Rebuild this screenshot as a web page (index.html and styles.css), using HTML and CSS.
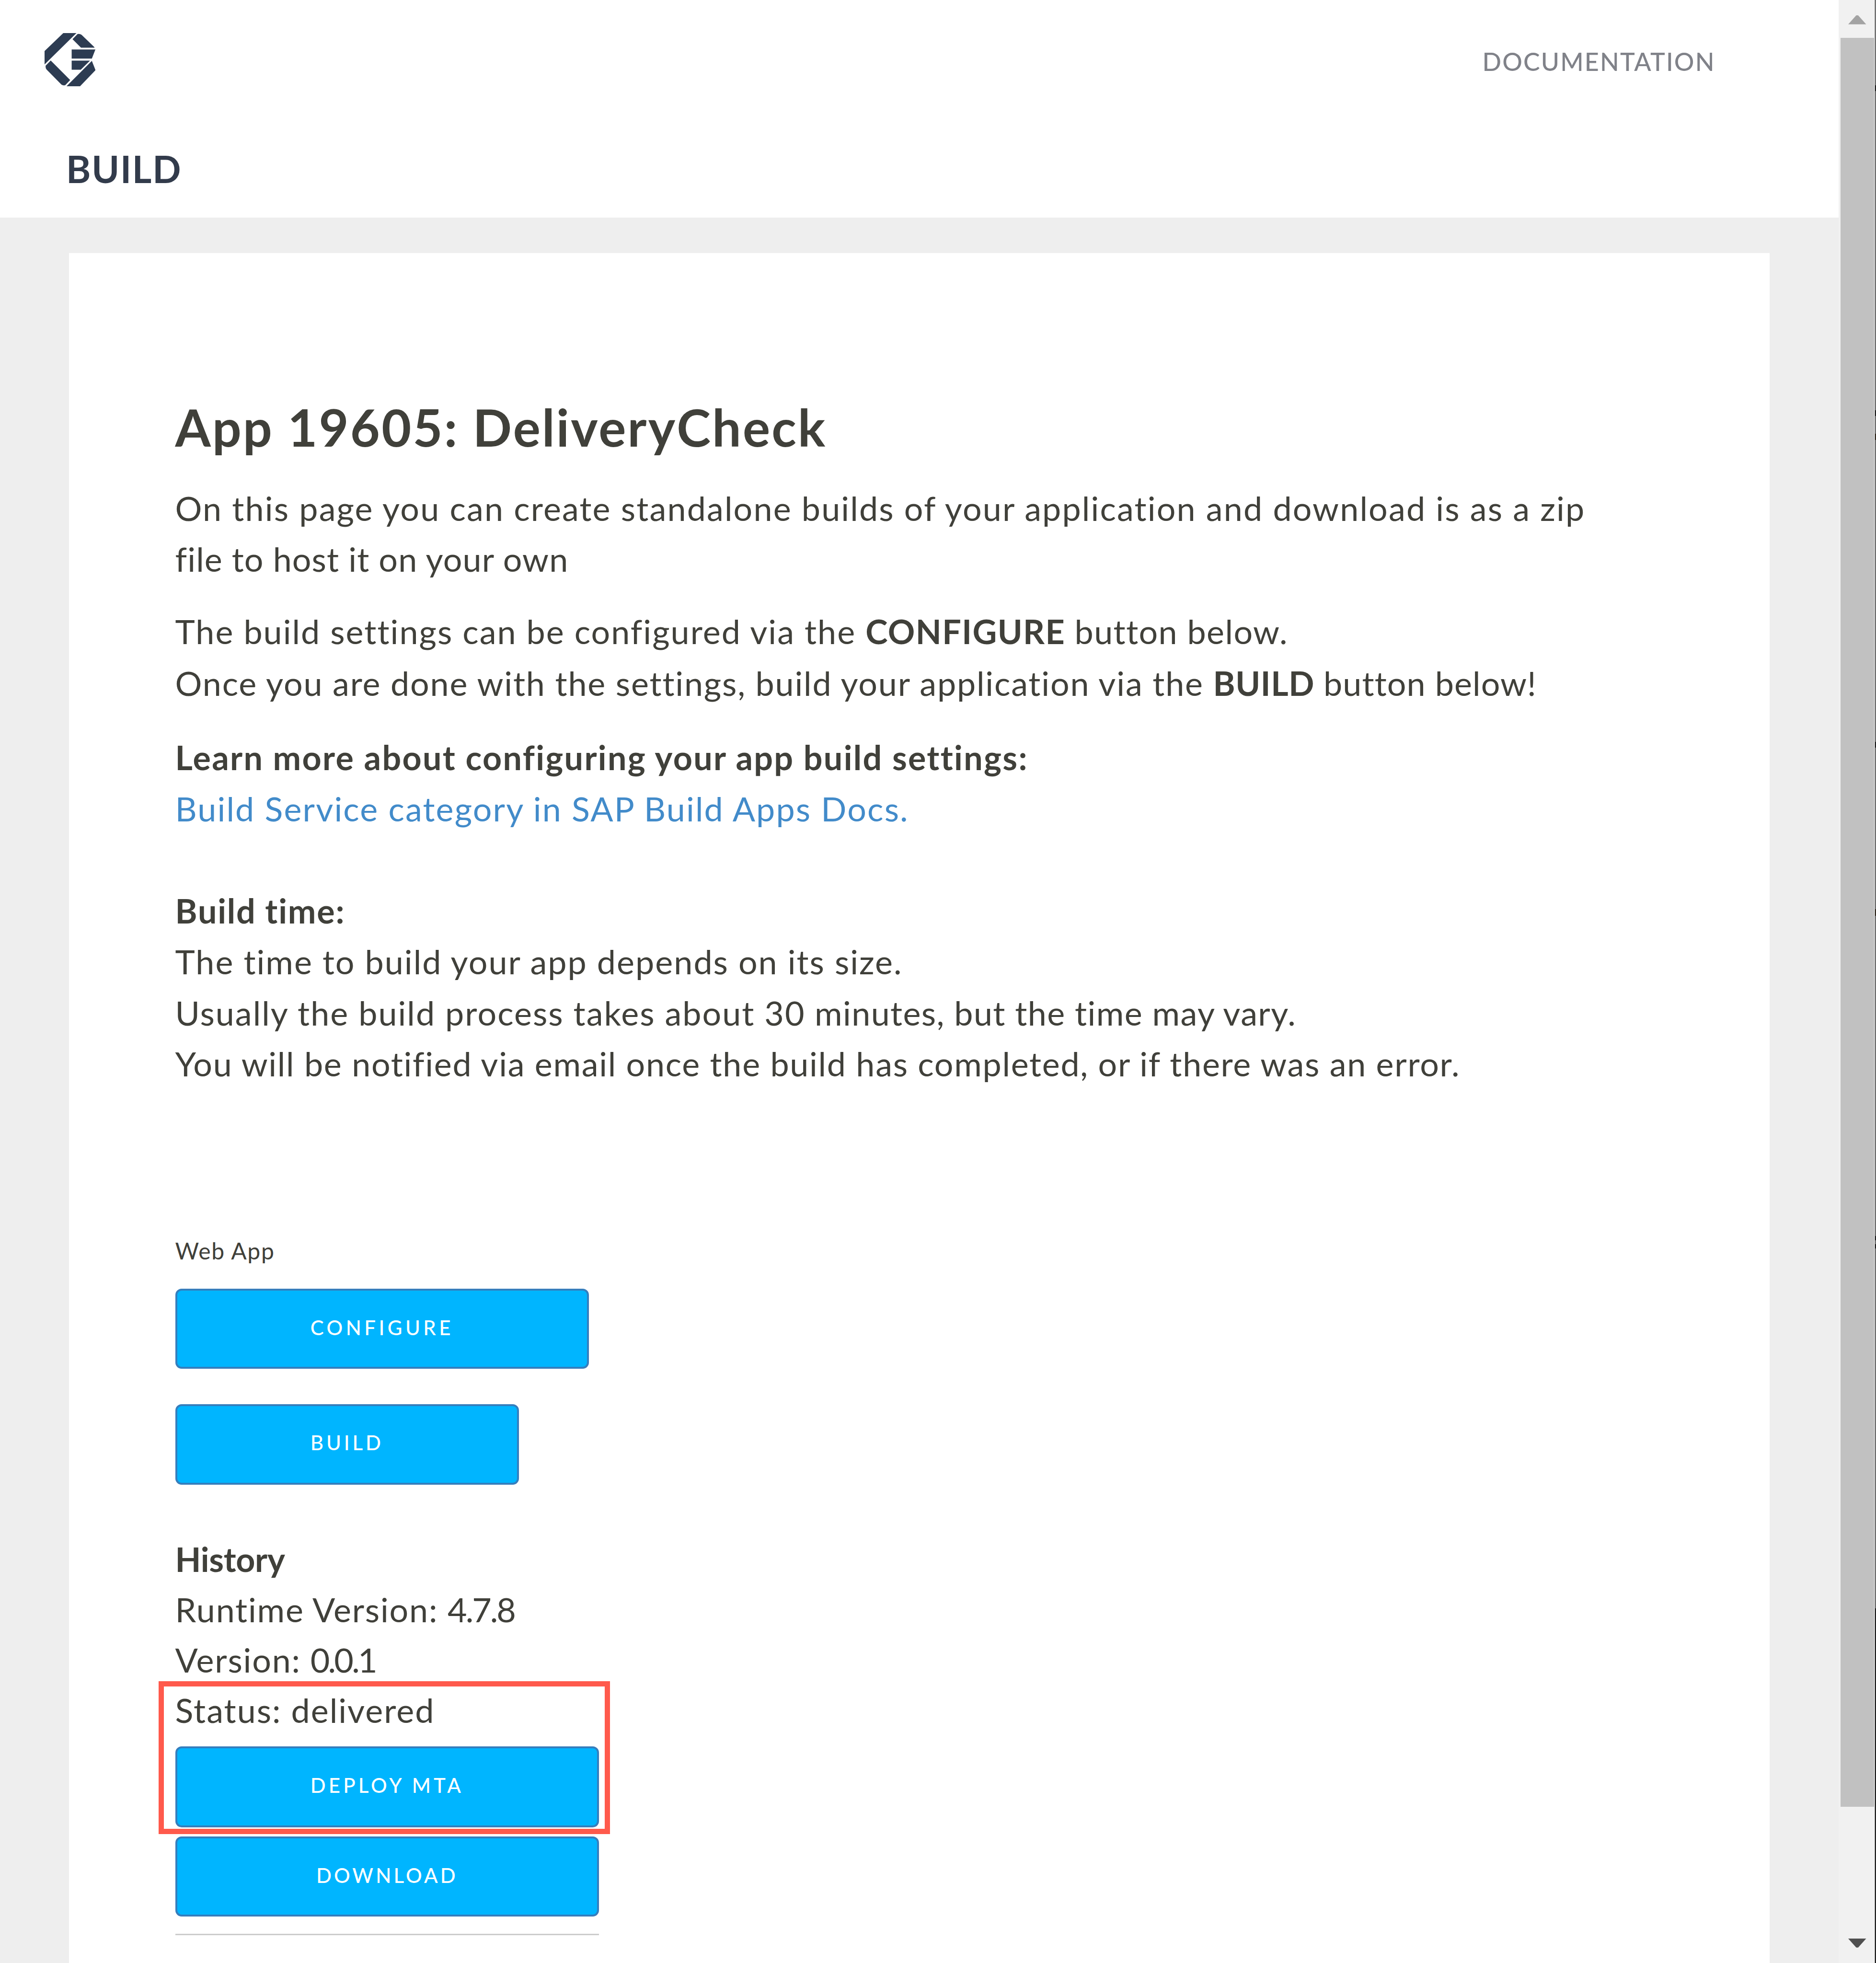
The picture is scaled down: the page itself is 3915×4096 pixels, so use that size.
FILE: index.html
```html
<!DOCTYPE html>
<html lang="en">
<head>
<meta charset="utf-8">
<title>Build</title>
<link rel="stylesheet" href="styles.css">
</head>
<body>
<div class="page">
  <header class="header">
    <div class="topbar">
      <svg class="logo" viewBox="120 90 414 432" aria-hidden="true">
        <path d="M272 90H379L120 345V236Z"/>
        <path d="M347 139L388 98Q405 94 421 104L525 205V209H416Z"/>
        <path d="M340 223H533L504 297H340Z"/>
        <path d="M340 314H489L414 388H340Z"/>
        <path d="M504 316L534 391L408 522H298Z"/>
        <path d="M170 313L328 471L288 513Q272 518 257 508L136 386Q127 375 128 355Z"/>
      </svg>
      <a class="nav-link">DOCUMENTATION</a>
    </div>
    <h2 class="section-title">BUILD</h2>
  </header>
  <main class="content">
    <section class="card">
      <h1 class="app-title">App 19605: DeliveryCheck</h1>
      <p class="intro"><span class="track-l">On this page you can create standalone builds of your application and download is as a zip</span><br><span class="track-xs">file to host it on your own</span></p>
      <p class="steps"><span class="track-m">The build settings can be configured via the </span><span class="track-s"><b>CONFIGURE</b> button below.</span><br><span class="track-sm">Once you are done with the settings, build your application via the </span><b class="track-xxs">BUILD</b><span class="track-xs"> button below!</span></p>
      <p class="details"><b class="track-xl">Learn more about configuring your app build settings:</b><br><a class="link track-l">Build Service category in SAP Build Apps Docs.</a><br><br><b class="track-sm">Build time:</b><br><span class="track-m">The time to build your app depends on its size.</span><br><span class="track-m">Usually the build process takes about 30</span><span class="track-s"> minutes, but the time may vary.</span><br><span class="track-s2">You will be notified via email once the build has completed, or if there was an error.</span></p>
      <div class="target">Web App</div>
      <a class="btn btn-configure">CONFIGURE</a>
      <a class="btn btn-build">BUILD</a>
      <div class="history">
        <div><b class="track-tight">History</b></div>
        <div><span class="track-sm">Runtime Version: </span><span class="digits">4.7.8</span></div>
        <div><span class="track-sm">Version: </span><span class="digits digits-tight">0.0.1</span></div>
        <div class="highlight">
          <div class="track-m">Status: delivered</div>
          <a class="btn btn-deploy">DEPLOY MTA</a>
        </div>
        <a class="btn btn-download">DOWNLOAD</a>
        <hr class="rule">
      </div>
    </section>
  </main>
</div>
<aside class="scrollbar">
  <svg class="arrow arrow-up" viewBox="0 0 38 19"><path d="M0 19L17 0H21L38 19Z"/></svg>
  <div class="thumb"></div>
  <svg class="arrow arrow-down" viewBox="0 0 38 19"><path d="M0 0H38L21 19H17Z"/></svg>
</aside>
<div class="edge"></div>
</body>
</html>
```
FILE: styles.css
```css
* { box-sizing: border-box; }

body {
  margin: 0;
  width: 3915px;
  height: 4096px;
  display: flex;
  overflow: hidden;
  background: #eee;
  color: #40403a;
  font: 400 70px/106.5px Lato, "Open Sans", sans-serif;
}

h1, h2, p { margin: 0; }
b { font-weight: 700; }

/* Letter tracking steps for running text */
.track-tight { letter-spacing: -0.29px; }
.track-xxs { letter-spacing: 0.6px; }
.track-xs { letter-spacing: 1.1px; }
.track-s { letter-spacing: 1.43px; }
.track-s2 { letter-spacing: 1.71px; }
.track-sm { letter-spacing: 1.82px; }
.track-m { letter-spacing: 2.03px; }
.track-l { letter-spacing: 2.15px; }
.track-xl { letter-spacing: 2.33px; }

.page { flex: none; width: 3836.6px; height: 4096px; overflow: hidden; }

.header { height: 453.5px; background: #fff; }

.topbar {
  height: 250px;
  padding: 69.4px 261px 0 92.6px;
  display: flex;
  justify-content: space-between;
  align-items: flex-start;
}
.logo { width: 106.4px; height: 111.1px; fill: #2d3c52; }
.nav-link {
  margin-top: 28.6px;
  margin-right: -4px;
  font-size: 52px;
  line-height: 60px;
  font-weight: 500;
  letter-spacing: 2.1px;
  color: #808289;
}

.section-title {
  padding-left: 138px;
  margin-top: 51.6px;
  font-size: 78px;
  line-height: 100px;
  font-weight: 700;
  letter-spacing: 1.8px;
  color: #323b4b;
}

.content { padding: 74.1px 143.4px 0 143.6px; }

.card {
  height: 3568.4px;
  padding: 303.3px 222px 0;
  background: #fff;
  white-space: nowrap;
}

.app-title {
  font-size: 107px;
  line-height: 120px;
  font-weight: 700;
  letter-spacing: 3.23px;
  margin-bottom: 56px;
}
.intro { margin-bottom: 43px; }
.steps { line-height: 108.5px; margin-bottom: 47.6px; }
.link { color: #428bca; }
.target {
  margin: 306.9px 0 49.1px;
  font-size: 48px;
  line-height: 60px;
  letter-spacing: 1.69px;
}

.btn {
  display: block;
  height: 167px;
  padding-top: 51.75px;
  border: 4px solid #357ebd;
  border-radius: 13px;
  background: #00b5ff;
  color: #fff;
  font-size: 42px;
  line-height: 50px;
  font-weight: 500;
  text-align: center;
}
.btn-configure { width: 863.4px; margin-bottom: 73.6px; letter-spacing: 6.45px; }
.btn-build { width: 717.5px; height: 168.8px; letter-spacing: 5.9px; }

.history { width: 884.5px; margin-top: 102.5px; line-height: 105.1px; }
.digits { letter-spacing: -3px; }
.digits-tight { letter-spacing: -3.7px; }
.btn-deploy { height: 169px; margin-top: 23.1px; letter-spacing: 6.1px; }
.btn-download { margin-top: 18.6px; letter-spacing: 5.15px; }
.rule { height: 3px; margin: 36px 0 0; border: 0; background: #ccc; }

.highlight { position: relative; }
.highlight::after {
  content: "";
  position: absolute;
  inset: -8.1px -23px -14px -34.5px;
  border: 11.6px solid #ff5a4c;
}

.scrollbar {
  flex: none;
  width: 75.4px;
  height: 4096px;
  padding: 32.4px 1px 32.3px 4.7px;
  display: flex;
  flex-direction: column;
  align-items: center;
  background: #f1f1f1;
}
.arrow { width: 37.5px; height: 18.8px; flex: none; display: block; }
.arrow-up { fill: #a3a3a3; }
.arrow-down { fill: #505050; margin-top: auto; }
.thumb { width: 69.4px; height: 3691px; margin-top: 27.4px; background: #c1c1c1; flex: none; }

/* Sliver of the window behind, along the right side */
.edge {
  flex: none;
  width: 3px;
  border-left: 1px solid #a0a0a0;
  background: linear-gradient(#6e6e6e 0 178px, #1a1a1a 178px 190px, #6e6e6e 190px 856px, #1a1a1a 856px 868px, #6e6e6e 868px 905px, #2e2419 905px 918px, #6e6e6e 918px 1548px, #1a1a1a 1548px 1560px, #6e6e6e 1560px 1897px, #2e2419 1897px 1911px, #6e6e6e 1911px 2579px, #1a1a1a 2579px 2588px, #6e6e6e 2588px 2596px, #1a1a1a 2596px 2605px, #6e6e6e 2605px 3356px, #1a1a1a 3356px);
}
```
